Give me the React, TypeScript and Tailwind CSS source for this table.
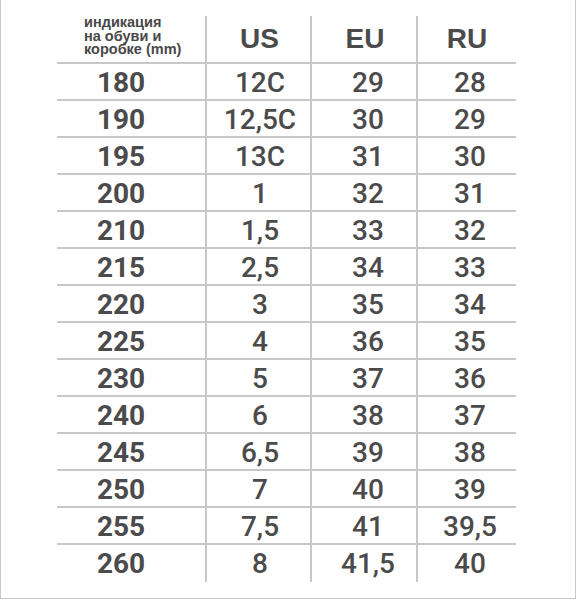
import React from "react";

const rows: [string, string, string, string][] = [
  ["180", "12C", "29", "28"],
  ["190", "12,5C", "30", "29"],
  ["195", "13C", "31", "30"],
  ["200", "1", "32", "31"],
  ["210", "1,5", "33", "32"],
  ["215", "2,5", "34", "33"],
  ["220", "3", "35", "34"],
  ["225", "4", "36", "35"],
  ["230", "5", "37", "36"],
  ["240", "6", "38", "37"],
  ["245", "6,5", "39", "38"],
  ["250", "7", "40", "39"],
  ["255", "7,5", "41", "39,5"],
  ["260", "8", "41,5", "40"],
];

const num = "font-['Roboto',sans-serif] text-[28px] leading-none text-[#4b4b4b]";
const head = "font-['Liberation_Sans',Arial,sans-serif] font-bold text-[28px] leading-none text-[#4b4b4b]";

export default function App() {
  return (
    <div className="w-[577px] h-[600px] bg-white">
      <div className="w-[576px] h-[599px] border-l border-r border-b border-[#c8c8c8] pt-[16px] pl-[56px]">
        <div className="flex flex-col w-[459px]">
          <div className="flex h-[46px]">
            <div className="w-[148px] pl-[27px] font-['Liberation_Sans',Arial,sans-serif] font-bold text-[14.5px] leading-[13.5px] text-[#484848]">
              <div>индикация</div>
              <div>на обуви и</div>
              <div>коробке (mm)</div>
            </div>
            <div className={`w-[105px] border-l-2 border-[#c8c8c8] flex items-center justify-center pl-[2px] ${head}`}>
              US
            </div>
            <div className={`w-[106px] border-l-2 border-[#c8c8c8] flex items-center justify-center pl-[2px] ${head}`}>
              EU
            </div>
            <div className={`w-[100px] border-l-2 border-[#c8c8c8] flex items-center justify-center ${head}`}>
              RU
            </div>
          </div>
          {rows.map((r) => (
            <div key={r[0]} className="flex border-t-2 border-[#c8c8c8]">
              <div className={`w-[148px] h-[35px] flex items-center justify-center pt-[3px] pr-[20px] font-bold ${num}`}>
                {r[0]}
              </div>
              <div className={`w-[105px] h-[35px] border-l-2 border-[#c8c8c8] flex items-center justify-center pt-[3px] pl-[3px] font-medium ${num}`}>
                {r[1]}
              </div>
              <div className={`w-[106px] h-[35px] border-l-2 border-[#c8c8c8] flex items-center justify-center pt-[3px] pl-[8px] font-medium ${num}`}>
                {r[2]}
              </div>
              <div className={`w-[100px] h-[35px] border-l-2 border-[#c8c8c8] flex items-center justify-center pt-[3px] pl-[6px] font-medium ${num}`}>
                {r[3]}
              </div>
            </div>
          ))}
          <div className="flex h-[2px]">
            <div className="w-[148px]" />
            <div className="w-[105px] border-l-2 border-[#c8c8c8]" />
            <div className="w-[106px] border-l-2 border-[#c8c8c8]" />
            <div className="w-[100px] border-l-2 border-[#c8c8c8]" />
          </div>
        </div>
      </div>
    </div>
  );
}
